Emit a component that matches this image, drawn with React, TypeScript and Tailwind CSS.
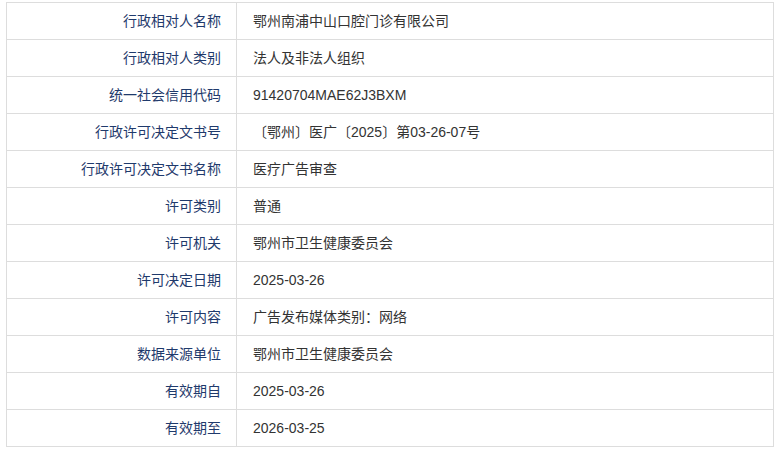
import React from "react";

const rows: [string, string][] = [
  ["行政相对人名称", "鄂州南浦中山口腔门诊有限公司"],
  ["行政相对人类别", "法人及非法人组织"],
  ["统一社会信用代码", "91420704MAE62J3BXM"],
  ["行政许可决定文书号", "〔鄂州〕医广〔2025〕第03-26-07号"],
  ["行政许可决定文书名称", "医疗广告审查"],
  ["许可类别", "普通"],
  ["许可机关", "鄂州市卫生健康委员会"],
  ["许可决定日期", "2025-03-26"],
  ["许可内容", "广告发布媒体类别：网络"],
  ["数据来源单位", "鄂州市卫生健康委员会"],
  ["有效期自", "2025-03-26"],
  ["有效期至", "2026-03-25"],
];

export default function App() {
  return (
    <div
      className="w-[780px] h-[455px] bg-white pt-[2px] pl-[6px]"
      style={{ fontFamily: '"Liberation Sans", "Noto Sans CJK SC", sans-serif' }}
    >
      <div className="w-[768px] border-t border-l border-r border-[#dddddd]">
        {rows.map(([k, v]) => (
          <div
            key={k}
            className="grid grid-cols-[230px_1fr] h-[37px] border-b border-[#dddddd] text-[14px]"
          >
            <div className="flex items-center justify-end pr-[15px] border-r border-[#dddddd] text-[#1f3a6c]">
              {k}
            </div>
            <div className="flex items-center pl-[16px] text-[#333333]">{v}</div>
          </div>
        ))}
      </div>
    </div>
  );
}
